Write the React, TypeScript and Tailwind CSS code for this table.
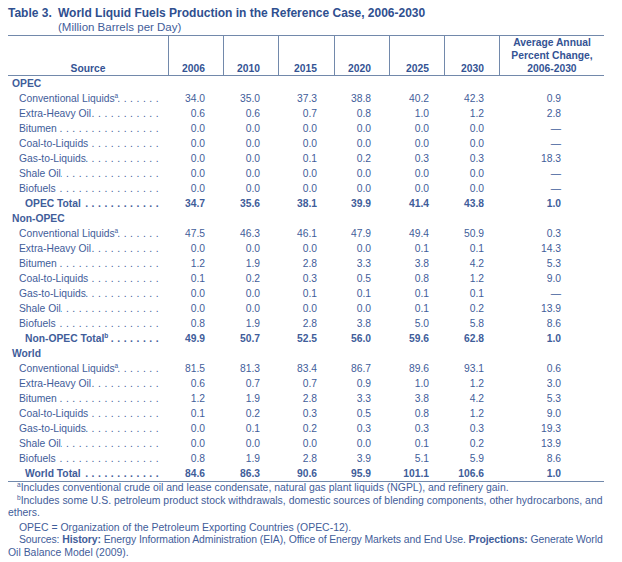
import React from "react";

type Row =
  | { kind: "group"; label: string }
  | { kind: "item" | "total"; label: string; sup?: string; v: string[] };

const rows: Row[] = [
  { kind: "group", label: "OPEC" },
  { kind: "item", label: "Conventional Liquids", sup: "a", v: ["34.0", "35.0", "37.3", "38.8", "40.2", "42.3", "0.9"] },
  { kind: "item", label: "Extra-Heavy Oil", v: ["0.6", "0.6", "0.7", "0.8", "1.0", "1.2", "2.8"] },
  { kind: "item", label: "Bitumen", v: ["0.0", "0.0", "0.0", "0.0", "0.0", "0.0", "—"] },
  { kind: "item", label: "Coal-to-Liquids ", v: ["0.0", "0.0", "0.0", "0.0", "0.0", "0.0", "—"] },
  { kind: "item", label: "Gas-to-Liquids", v: ["0.0", "0.0", "0.1", "0.2", "0.3", "0.3", "18.3"] },
  { kind: "item", label: "Shale Oil", v: ["0.0", "0.0", "0.0", "0.0", "0.0", "0.0", "—"] },
  { kind: "item", label: "Biofuels", v: ["0.0", "0.0", "0.0", "0.0", "0.0", "0.0", "—"] },
  { kind: "total", label: "OPEC Total ", v: ["34.7", "35.6", "38.1", "39.9", "41.4", "43.8", "1.0"] },
  { kind: "group", label: "Non-OPEC" },
  { kind: "item", label: "Conventional Liquids", sup: "a", v: ["47.5", "46.3", "46.1", "47.9", "49.4", "50.9", "0.3"] },
  { kind: "item", label: "Extra-Heavy Oil", v: ["0.0", "0.0", "0.0", "0.0", "0.1", "0.1", "14.3"] },
  { kind: "item", label: "Bitumen", v: ["1.2", "1.9", "2.8", "3.3", "3.8", "4.2", "5.3"] },
  { kind: "item", label: "Coal-to-Liquids ", v: ["0.1", "0.2", "0.3", "0.5", "0.8", "1.2", "9.0"] },
  { kind: "item", label: "Gas-to-Liquids", v: ["0.0", "0.0", "0.1", "0.1", "0.1", "0.1", "—"] },
  { kind: "item", label: "Shale Oil", v: ["0.0", "0.0", "0.0", "0.0", "0.1", "0.2", "13.9"] },
  { kind: "item", label: "Biofuels", v: ["0.8", "1.9", "2.8", "3.8", "5.0", "5.8", "8.6"] },
  { kind: "total", label: "Non-OPEC Total", sup: "b", v: ["49.9", "50.7", "52.5", "56.0", "59.6", "62.8", "1.0"] },
  { kind: "group", label: "World" },
  { kind: "item", label: "Conventional Liquids", sup: "a", v: ["81.5", "81.3", "83.4", "86.7", "89.6", "93.1", "0.6"] },
  { kind: "item", label: "Extra-Heavy Oil", v: ["0.6", "0.7", "0.7", "0.9", "1.0", "1.2", "3.0"] },
  { kind: "item", label: "Bitumen", v: ["1.2", "1.9", "2.8", "3.3", "3.8", "4.2", "5.3"] },
  { kind: "item", label: "Coal-to-Liquids ", v: ["0.1", "0.2", "0.3", "0.5", "0.8", "1.2", "9.0"] },
  { kind: "item", label: "Gas-to-Liquids", v: ["0.0", "0.1", "0.2", "0.3", "0.3", "0.3", "19.3"] },
  { kind: "item", label: "Shale Oil", v: ["0.0", "0.0", "0.0", "0.0", "0.1", "0.2", "13.9"] },
  { kind: "item", label: "Biofuels", v: ["0.8", "1.9", "2.8", "3.9", "5.1", "5.9", "8.6"] },
  { kind: "total", label: "World Total ", v: ["84.6", "86.3", "90.6", "95.9", "101.1", "106.6", "1.0"] },
];

const GRID = "grid grid-cols-[160px_55px_55px_56px_55px_55px_55px_105px]";
const PADS = ["pr-[18px]", "pr-[18px]", "pr-[17px]", "pr-[18px]", "pr-[15px]", "pr-[15px]", "pr-[43px]"];

function Sup({ c }: { c: string }) {
  return <span className="relative -top-[4px] text-[6.5px] leading-none">{c}</span>;
}

function Dots() {
  return (
    <span className="flex min-w-0 flex-1 justify-end overflow-hidden">
      <span className="shrink-0 whitespace-nowrap tracking-[0.35px]">{". ".repeat(40)}</span>
    </span>
  );
}

function BodyRow({ r }: { r: Row }) {
  if (r.kind === "group") {
    return (
      <div className={`${GRID} h-[15px] items-center`}>
        <div className="pl-[4px] font-bold">{r.label}</div>
      </div>
    );
  }
  const bold = r.kind === "total";
  return (
    <div className={`${GRID} h-[15px] items-center ${bold ? "font-bold" : ""}`}>
      <div className={`flex items-center whitespace-pre pr-[9px] ${bold ? "pl-[17px]" : "pl-[11px]"}`}>
        <span className="whitespace-pre">
          {r.label}
          {r.sup ? <Sup c={r.sup} /> : null}
        </span>
        <Dots />
      </div>
      {r.v.map((x, i) => (
        <div key={i} className={`text-right ${PADS[i]}`}>
          {x}
        </div>
      ))}
    </div>
  );
}

export default function App() {
  const years = ["2006", "2010", "2015", "2020", "2025", "2030"];
  return (
    <div className="h-[562px] w-[622px] bg-white font-['Liberation_Sans',Arial,sans-serif] text-[10.3px] text-[#3f5d9a]">
      <div className="w-[596px] ml-[8px] pt-[6px]">
        <div className="flex font-bold text-[12px] leading-[14px] text-[#2f4f8f]">
          <div className="w-[50px] shrink-0">Table 3.</div>
          <div>
            <div>World Liquid Fuels Production in the Reference Case, 2006-2030</div>
            <div className="font-normal text-[11.5px] text-[#3f5d9a]">(Million Barrels per Day)</div>
          </div>
        </div>

        <div className={`${GRID} mt-[1px] h-[41px] border-y border-[#7289ab] font-bold leading-[13px] text-[#345394]`}>
          <div className="flex items-end justify-center pb-[1px]">Source</div>
          {years.map((y, i) => (
            <div key={y} className={`flex items-end justify-end border-l border-[#7289ab] pb-[1px] ${PADS[i]}`}>
              {y}
            </div>
          ))}
          <div className="flex items-end justify-center border-l border-[#7289ab] pb-[1px] text-center">
            <div>
              Average Annual
              <br />
              Percent Change,
              <br />
              2006-2030
            </div>
          </div>
        </div>

        <div className="border-b border-[#7289ab]">
          {rows.map((r, i) => (
            <BodyRow key={i} r={r} />
          ))}
        </div>

        <div className="text-[10.45px] leading-[12.5px]">
          <div className="pl-[9px] whitespace-nowrap">
            <Sup c="a" />
            Includes conventional crude oil and lease condensate, natural gas plant liquids (NGPL), and refinery gain.
          </div>
          <div className="whitespace-nowrap pl-[9px]">
            <Sup c="b" />
            Includes some U.S. petroleum product stock withdrawals, domestic sources of blending components, other hydrocarbons, and
          </div>
          <div className="whitespace-nowrap">ethers.</div>
          <div className="mt-[2px] whitespace-nowrap pl-[11px]">
            OPEC = Organization of the Petroleum Exporting Countries (OPEC-12).
          </div>
          <div className="whitespace-nowrap pl-[11px] tracking-[-0.1px]">
            Sources: <span className="font-bold">History:</span> Energy Information Administration (EIA), Office of Energy Markets and End Use.{" "}
            <span className="font-bold">Projections:</span> Generate World
          </div>
          <div className="whitespace-nowrap">Oil Balance Model (2009).</div>
        </div>
      </div>
    </div>
  );
}
